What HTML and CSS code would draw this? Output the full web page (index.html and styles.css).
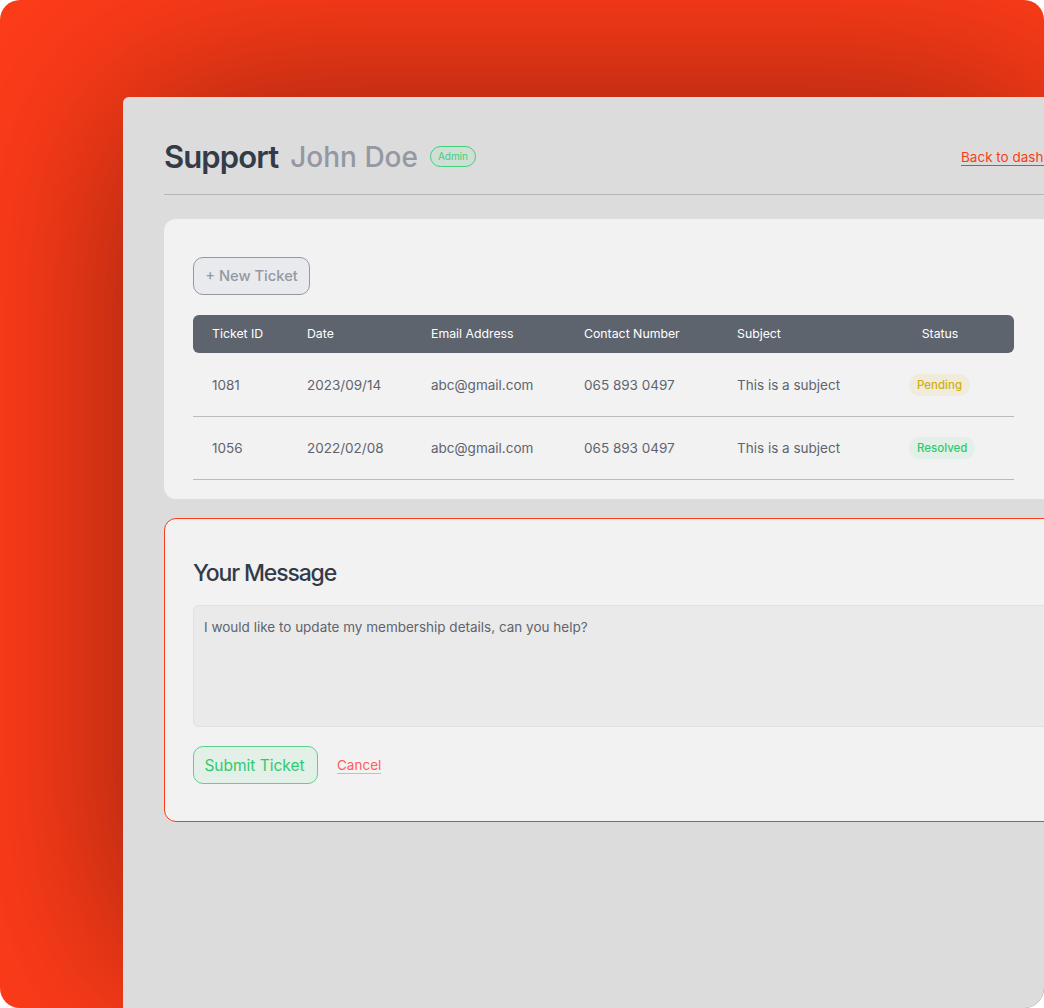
FILE: index.html
```html
<!DOCTYPE html>
<html lang="en">
<head>
<meta charset="utf-8">
<title>Support</title>
<link rel="stylesheet" href="styles.css">
</head>
<body>
<div class="stage">
  <main class="window">
    <header class="page-head">
      <div class="titles">
        <h1 class="title">Support</h1>
        <span class="user">John Doe</span>
        <span class="role">Admin</span>
      </div>
      <a class="back" href="#">Back to dashboard</a>
    </header>

    <section class="card tickets">
      <button class="new-ticket" type="button">+ New Ticket</button>
      <table class="table">
        <thead>
          <tr>
            <th class="c-id">Ticket ID</th>
            <th class="c-date">Date</th>
            <th class="c-mail">Email Address</th>
            <th class="c-phone">Contact Number</th>
            <th class="c-subject">Subject</th>
            <th class="c-status">Status</th>
          </tr>
        </thead>
        <tbody>
          <tr>
            <td>1081</td>
            <td>2023/09/14</td>
            <td>abc@gmail.com</td>
            <td>065 893 0497</td>
            <td>This is a subject</td>
            <td class="status-cell"><span class="pill pending">Pending</span></td>
          </tr>
          <tr>
            <td>1056</td>
            <td>2022/02/08</td>
            <td>abc@gmail.com</td>
            <td>065 893 0497</td>
            <td>This is a subject</td>
            <td class="status-cell"><span class="pill resolved">Resolved</span></td>
          </tr>
        </tbody>
      </table>
    </section>

    <section class="card message">
      <h2 class="message-title">Your Message</h2>
      <div class="field">I would like to update my membership details, can you help?</div>
      <div class="actions">
        <button class="submit" type="button">Submit Ticket</button>
        <a class="cancel" href="#">Cancel</a>
      </div>
    </section>
  </main>
</div>
</body>
</html>
```
FILE: styles.css
```css
* { box-sizing: border-box; }
html, body { margin: 0; height: 100%; background: #fff; }
body { font-family: Inter, "Liberation Sans", sans-serif; overflow: hidden; }

.stage {
  position: relative;
  width: 1044px;
  height: 1008px;
  padding: 97px 0 0 123px;
  background: #ff3c19;
  border-radius: 20px;
  overflow: hidden;
}
/* soft shadow cast by the window; it tapers before the stage's right and bottom edges */
.stage::before {
  content: "";
  position: absolute;
  left: 123px;
  top: 97px;
  width: 925px;
  height: 875px;
  border-radius: 6px;
  box-shadow: 0 0 200px rgba(0, 0, 0, 0.44);
}

.window {
  position: relative;
  width: 1000px;
  height: 1000px;
  padding: 0 0 0 41px;
  background: #dcdcdc;
  border-radius: 6px 0 0 0;
}

.page-head {
  display: flex;
  justify-content: space-between;
  align-items: center;
  width: 880px;
  height: 98px;
  padding: 22px 0 0;
  border-bottom: 1px solid #b4b6ba;
}
.titles { display: flex; align-items: center; }
.title {
  margin: 0;
  font-size: 31px;
  font-weight: 600;
  letter-spacing: -0.9px;
  color: #333b49;
}
.user {
  margin-left: 12px;
  font-size: 28px;
  font-weight: 500;
  color: #9498a3;
}
.role {
  margin: -1px 0 0 12px;
  padding: 0 7px;
  height: 21px;
  line-height: 19px;
  font-size: 10px;
  letter-spacing: -0.05px;
  color: #3ecf78;
  background: #d0dfd6;
  border: 1px solid #3ecf78;
  border-radius: 11px;
}
.back {
  flex: none;
  width: 83px;
  height: 17px;
  line-height: 16px;
  margin-top: 1px;
  white-space: nowrap;
  font-size: 13.5px;
  color: #fa3c18;
  text-decoration: none;
  border-bottom: 1px solid #fa3c18;
}

.card {
  width: 900px;
  background: #f2f2f2;
  border-radius: 12px;
}

.tickets {
  margin-top: 24px;
  height: 280px;
  padding: 38px 0 0 29px;
}
.new-ticket {
  display: block;
  width: 117px;
  height: 38px;
  padding: 0;
  font: 500 14.7px Inter, "Liberation Sans", sans-serif;
  color: #9498a3;
  background: #e8eaed;
  border: 1px solid #9498a3;
  border-radius: 10px;
}

.table {
  width: 821px;
  margin-top: 20px;
  table-layout: fixed;
  border-collapse: separate;
  border-spacing: 0;
  font-size: 13.5px;
  color: #5f646e;
}
.table th {
  height: 38px;
  padding: 0 0 2px 19px;
  font-size: 12.3px;
  font-weight: 400;
  text-align: left;
  color: #fff;
  background: #5e646e;
}
.table td {
  height: 63.5px;
  padding: 0 0 0 19px;
  border-bottom: 1px solid #b8babd;
}
.table tbody tr:first-child td { padding-top: 1px; }
.c-id { width: 95px; border-radius: 6px 0 0 6px; }
.c-date { width: 124px; }
.c-mail { width: 153px; }
.c-phone { width: 153px; }
.c-subject { width: 148px; }
.table .c-status { padding: 0 0 2px; text-align: center; border-radius: 0 6px 6px 0; }
.table .status-cell { padding-left: 43px; }

.pill {
  display: inline-block;
  height: 22px;
  padding: 0 8px;
  line-height: 22px;
  font-size: 11.5px;
  font-weight: 500;
  border-radius: 11px;
}
.pending { color: #d2ae0e; background: #efecdb; }
.resolved { color: #2fca6d; background: #e3f0e8; }

.message {
  height: 304px;
  margin-top: 19px;
  padding: 38px 0 0 28px;
  border: 1px solid #fa3c18;
}
.message-title {
  margin: 1px 0 -1px;
  font-size: 23px;
  line-height: 30px;
  font-weight: 500;
  letter-spacing: -1.15px;
  color: #333b49;
}
.field {
  width: 880px;
  height: 122px;
  margin-top: 18px;
  padding: 11px 10px;
  font-size: 13.5px;
  line-height: 20px;
  color: #5f646e;
  background: #eaeaea;
  border: 1px solid #e1e1e1;
  border-radius: 6px;
}
.actions {
  display: flex;
  align-items: center;
  gap: 19px;
  margin-top: 19px;
}
.submit {
  width: 125px;
  height: 38px;
  padding: 0 2px 0 0;
  font: 400 15.5px Inter, "Liberation Sans", sans-serif;
  color: #2fca6d;
  background: #e3f0e8;
  border: 1px solid #5fd08d;
  border-radius: 10px;
}
.cancel {
  font-size: 13.5px;
  color: #ff5c5c;
  text-decoration: none;
  border-bottom: 1px solid #ffa5a5;
}
```
